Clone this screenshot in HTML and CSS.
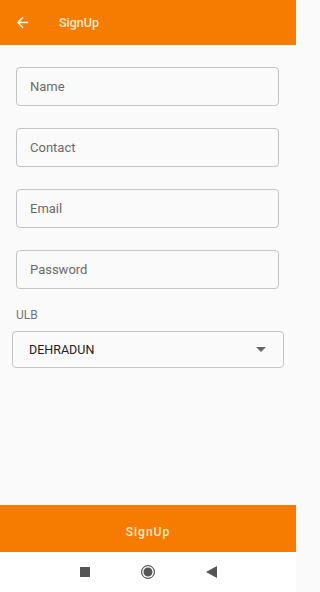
FILE: index.html
```html
<!DOCTYPE html>
<html>
<head>
<meta charset="utf-8">
<link rel="stylesheet" href="styles.css">
</head>
<body>
<div class="screen">
  <header class="appbar">
    <svg class="back" viewBox="0 0 24 24" width="17" height="17"><path d="M20 11H7.83l5.59-5.59L12 4l-8 8 8 8 1.41-1.41L7.83 13H20v-2z" fill="#fff"/></svg>
    <span class="title">SignUp</span>
  </header>
  <main class="form">
    <div class="field">Name</div>
    <div class="field">Contact</div>
    <div class="field">Email</div>
    <div class="field">Password</div>
    <div class="label">ULB</div>
    <div class="select">
      <span>DEHRADUN</span>
      <svg width="10" height="5" viewBox="0 0 10 5"><path d="M0 0h10L5 5z" fill="#666"/></svg>
    </div>
  </main>
  <button class="submit">SignUp</button>
  <nav class="navbar">
    <span class="sq"></span>
    <span class="circ"></span>
    <svg width="11" height="12" viewBox="0 0 11 12"><path d="M11 0v12L0 6z" fill="#555"/></svg>
  </nav>
</div>
</body>
</html>
```
FILE: styles.css
```css
* { box-sizing: border-box; }
html, body { margin: 0; padding: 0; }
body { font-family: Roboto, "Noto Sans", sans-serif; background: #fafafa; }
.screen { width: 296px; height: 592px; display: flex; flex-direction: column; background: #fafafa; overflow: hidden; }
.appbar { height: 45px; background: #f57c00; display: flex; align-items: center; padding-left: 14px; flex-shrink: 0; }
.back { margin-right: 28px; }
.title { color: #ffe9cc; font-size: 12.5px; font-weight: 500; }
.form { flex: 1; padding: 22px 17px 0 16px; display: flex; flex-direction: column; }
.field { height: 39px; border: 1px solid #c4c4c4; border-radius: 4px; background: #fafafa; margin-bottom: 22px; display: flex; align-items: center; padding-left: 13px; font-size: 13px; color: #6b6b6b; }
.label { font-size: 12px; color: #757575; margin-top: -3px; height: 17px; }
.select { margin: 6px -5px 0 -4px; height: 37px; border: 1px solid #c4c4c4; border-radius: 4px; display: flex; align-items: center; justify-content: space-between; padding: 0 17px 0 16px; font-size: 12.5px; color: #222; }
.submit { height: 47px; border: 0; background: #f57c00; color: #ffe9cc; font-family: Roboto, sans-serif; font-size: 12px; letter-spacing: 1px; font-weight: 500; flex-shrink: 0; padding: 6px 0 0; width: 100%; }
.navbar { height: 40px; background: #fff; display: flex; align-items: center; justify-content: center; gap: 51px; flex-shrink: 0; }
.sq { width: 10px; height: 10px; background: #555; }
.circ { width: 14px; height: 14px; border-radius: 50%; border: 1.5px solid #555; background: #555; box-shadow: inset 0 0 0 1.5px #fff; }
```
